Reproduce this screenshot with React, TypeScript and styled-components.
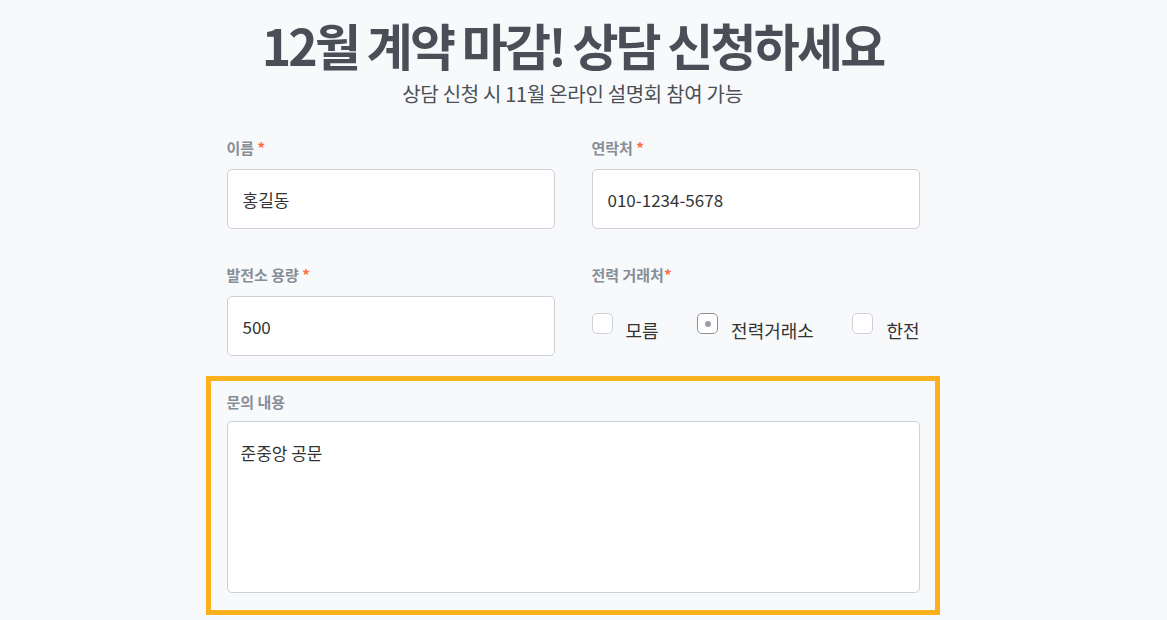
import React from 'react';
import styled, { createGlobalStyle } from 'styled-components';

const GlobalStyle = createGlobalStyle`
  html, body {
    margin: 0;
    padding: 0;
    background: #f8f9fb;
  }
  body {
    font-family: "Noto Sans CJK KR", "Noto Sans", sans-serif;
  }
  * {
    box-sizing: border-box;
  }
`;

const StyledPage = styled.div`
  padding: 14px 22px 0 0;
  display: flex;
  flex-direction: column;
  align-items: center;
`;

const StyledTitle = styled.h1`
  margin: 0;
  font-size: 50px;
  line-height: 60px;
  font-weight: 700;
  letter-spacing: -2.8px;
  color: #4a4f57;
`;

const StyledSubtitle = styled.p`
  margin: 6px 0 0;
  font-size: 20px;
  line-height: 28px;
  color: #4b5058;
  letter-spacing: -0.3px;
`;

const StyledForm = styled.form`
  width: 734px;
  margin-top: 30px;
`;

const StyledRows = styled.div`
  display: grid;
  grid-template-columns: 328px 328px;
  column-gap: 37px;
  row-gap: 36px;
  padding: 0 21px;
`;

const StyledField = styled.div`
  display: flex;
  flex-direction: column;
`;

const StyledLabel = styled.label<{ $gap?: number }>`
  font-size: 15px;
  line-height: 20px;
  font-weight: 700;
  color: #868e96;
  margin-bottom: ${({ $gap }) => $gap ?? 11}px;

  .required {
    color: #ff6b3d;
  }
`;

const StyledInput = styled.input`
  height: 60px;
  width: 100%;
  border: 1px solid #cdd1d7;
  border-radius: 5px;
  background: #fff;
  padding: 0 15px;
  font-family: inherit;
  font-size: 17px;
  color: #333;
  outline: none;
`;

const StyledOptions = styled.div`
  height: 60px;
  padding-top: 17px;
  display: flex;
  justify-content: space-between;
  align-items: flex-start;
`;

const StyledOption = styled.label`
  display: flex;
  align-items: flex-start;
  gap: 13px;
  font-size: 18px;
  color: #333;
  cursor: pointer;

  span {
    padding-top: 5px;
    line-height: 24px;
  }
`;

const StyledBox = styled.i<{ $checked?: boolean }>`
  width: 21px;
  height: 21px;
  border-radius: 5px;
  background: #fff;
  border: 1px solid ${({ $checked }) => ($checked ? '#8a8f96' : '#cdd1d7')};
  display: flex;
  align-items: center;
  justify-content: center;

  &::after {
    content: '';
    display: ${({ $checked }) => ($checked ? 'block' : 'none')};
    width: 6px;
    height: 6px;
    border-radius: 50%;
    background: #9a9ea4;
  }
`;

const StyledHighlight = styled.div`
  margin-top: 20px;
  border: 5px solid #fbb11e;
  padding: 11px 15px 17px 16px;
`;

const StyledTextarea = styled.textarea`
  width: 100%;
  height: 172px;
  resize: none;
  border: 1px solid #cdd1d7;
  border-radius: 5px;
  background: #fff;
  padding: 19px 13px;
  font-family: inherit;
  font-size: 17px;
  line-height: 24px;
  color: #333;
  outline: none;
  display: block;
`;

const options = [
  { id: 'unknown', name: '모름', checked: false },
  { id: 'kpx', name: '전력거래소', checked: true },
  { id: 'kepco', name: '한전', checked: false },
];

const App = () => {
  return (
    <>
      <GlobalStyle />
      <StyledPage>
        <StyledTitle>12월 계약 마감! 상담 신청하세요</StyledTitle>
        <StyledSubtitle>상담 신청 시 11월 온라인 설명회 참여 가능</StyledSubtitle>
        <StyledForm onSubmit={(e) => e.preventDefault()}>
          <StyledRows>
            <StyledField>
              <StyledLabel>
                이름 <span className="required">*</span>
              </StyledLabel>
              <StyledInput defaultValue="홍길동" />
            </StyledField>
            <StyledField>
              <StyledLabel>
                연락처 <span className="required">*</span>
              </StyledLabel>
              <StyledInput defaultValue="010-1234-5678" />
            </StyledField>
            <StyledField>
              <StyledLabel>
                발전소 용량 <span className="required">*</span>
              </StyledLabel>
              <StyledInput defaultValue="500" />
            </StyledField>
            <StyledField>
              <StyledLabel>
                전력 거래처<span className="required">*</span>
              </StyledLabel>
              <StyledOptions>
                {options.map((option) => (
                  <StyledOption key={option.id}>
                    <StyledBox $checked={option.checked} />
                    <span>{option.name}</span>
                  </StyledOption>
                ))}
              </StyledOptions>
            </StyledField>
          </StyledRows>
          <StyledHighlight>
            <StyledField>
              <StyledLabel $gap={9}>문의 내용</StyledLabel>
              <StyledTextarea defaultValue="준중앙 공문" />
            </StyledField>
          </StyledHighlight>
        </StyledForm>
      </StyledPage>
    </>
  );
};

export default App;
